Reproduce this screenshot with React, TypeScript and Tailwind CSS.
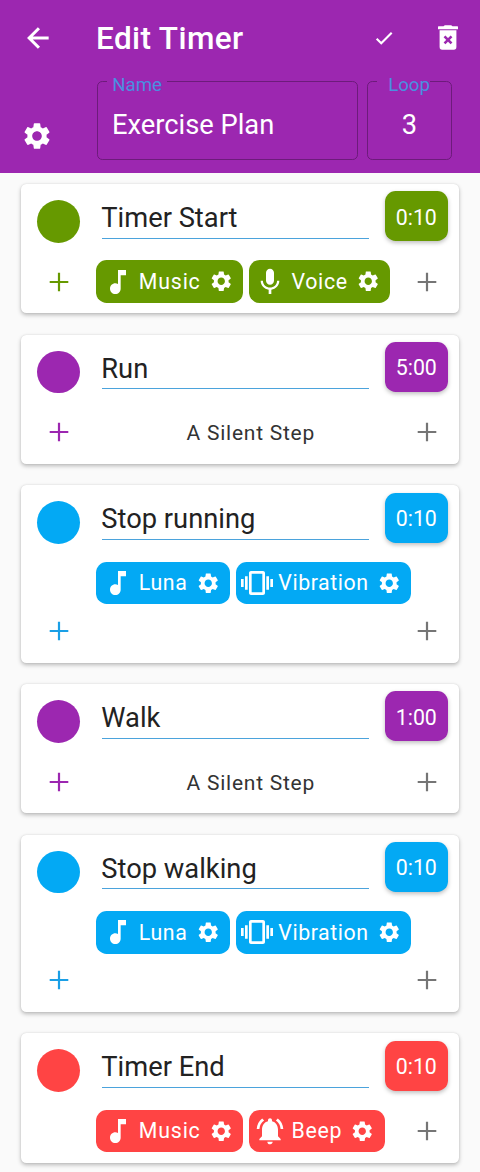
import type { ComponentType } from "react";
import {
  MdMic,
  MdMusicNote,
  MdNotificationsActive,
  MdSettings,
  MdVibration,
} from "react-icons/md";

type Action = { label: string; icon: ComponentType<{ className?: string }>; tracking: string };
type Tone = { bg: string; text: string };
type Step = { name: string; time: string; tone: Tone; actions: Action[]; tall?: boolean; noLeft?: boolean };

const green: Tone = { bg: "bg-[#669900]", text: "text-[#669900]" };
const purple: Tone = { bg: "bg-[#9c27b0]", text: "text-[#9c27b0]" };
const blue: Tone = { bg: "bg-[#03a9f4]", text: "text-[#1a9fe6]" };
const red: Tone = { bg: "bg-[#ff4444]", text: "text-[#ff4444]" };

const music: Action = { label: "Music", icon: MdMusicNote, tracking: "tracking-[0.8px]" };
const luna: Action = { label: "Luna", icon: MdMusicNote, tracking: "tracking-[0.6px]" };
const voice: Action = { label: "Voice", icon: MdMic, tracking: "tracking-[0.65px]" };
const beep: Action = { label: "Beep", icon: MdNotificationsActive, tracking: "tracking-[0.7px]" };
const vibration: Action = { label: "Vibration", icon: MdVibration, tracking: "tracking-[0.55px]" };

const steps: Step[] = [
  { name: "Timer Start", time: "0:10", tone: green, actions: [music, voice] },
  { name: "Run", time: "5:00", tone: purple, actions: [] },
  { name: "Stop running", time: "0:10", tone: blue, actions: [luna, vibration], tall: true },
  { name: "Walk", time: "1:00", tone: purple, actions: [] },
  { name: "Stop walking", time: "0:10", tone: blue, actions: [luna, vibration], tall: true },
  { name: "Timer End", time: "0:10", tone: red, actions: [music, beep], noLeft: true },
];

function BackArrow() {
  return (
    <svg viewBox="0 0 24 24" className="size-8" fill="none" stroke="currentColor" strokeWidth="2.3">
      <path d="M20 12H5.6M12.7 4.7 5.4 12l7.3 7.3" />
    </svg>
  );
}

function Check() {
  return (
    <svg viewBox="0 0 24 24" className="size-[22px]" fill="none" stroke="currentColor" strokeWidth="2.3">
      <path d="m4 12.7 5 5L20.4 6.3" />
    </svg>
  );
}

function Plus({ className }: { className: string }) {
  return (
    <svg viewBox="0 0 32 32" className={`size-8 shrink-0 ${className}`} fill="none" stroke="currentColor" strokeWidth="2.2">
      <path d="M16 6.7v18.6M6.7 16h18.6" />
    </svg>
  );
}

function TrashX() {
  return (
    <svg viewBox="0 0 20 25" className="h-[25px] w-5" fill="currentColor">
      <path d="M.6 1.2h4.9L6.8.2h6.4l1.3 1h4.9q.6 0 .6.6v2.4H0V1.8q0-.6.6-.6z" />
      <path d="M1.6 5.2h16.8v16.9a2.6 2.6 0 0 1-2.6 2.6H4.2a2.6 2.6 0 0 1-2.6-2.6z" />
      <path d="m6.5 11.4 7 7m0-7-7 7" fill="none" stroke="#9c27b0" strokeWidth="2.6" />
    </svg>
  );
}

function Chip({ action, tone }: { action: Action; tone: Tone }) {
  const Icon = action.icon;
  return (
    <div className={`flex h-[42.67px] items-center rounded-[10.67px] pr-[10px] pl-[5.33px] text-white ${tone.bg}`}>
      <Icon className="size-8 shrink-0" />
      <span className={`ml-[5.2px] text-[21.33px] leading-none ${action.tracking}`}>{action.label}</span>
      <MdSettings className="ml-[8.2px] size-[24.5px] shrink-0" />
    </div>
  );
}

function StepCard({ step }: { step: Step }) {
  return (
    <section
      className={`flex w-[437.33px] shrink-0 flex-col rounded-[5.33px] bg-white shadow-[0_2px_4px_rgba(0,0,0,0.26),0_0_2px_rgba(0,0,0,0.1)] ${
        step.tall ? "h-[177.33px]" : "h-[129.33px]"
      }`}
    >
      <div className="flex h-[76.3px] items-start pl-[16px]">
        <div className={`mt-4 size-[42.67px] rounded-full ${step.tone.bg}`} />
        <div className="ml-[22px] flex h-[54.67px] w-[267px] items-center border-b-[1.33px] border-[#4ba3dc] pt-[15.4px] text-[27.3px] leading-none text-[#222]">
          <span className="-ml-[0.7px]">{step.name}</span>
        </div>
        <div
          className={`mt-[7.3px] ml-4 flex h-[50px] w-[62.67px] items-center justify-center rounded-[10.67px] pt-[2px] text-[21.33px] leading-none text-white shadow-[0_2px_4px_rgba(0,0,0,0.25)] ${step.tone.bg}`}
        >
          {step.time}
        </div>
      </div>
      <div className="flex h-[42.67px] items-center">
        <div className="flex w-[75px] justify-center">
          {!step.tall && !step.noLeft && <Plus className={step.tone.text} />}
        </div>
        {step.actions.length > 0 ? (
          <div className="flex flex-1 gap-[5.7px]">
            {step.actions.map((a) => (
              <Chip key={a.label} action={a} tone={step.tone} />
            ))}
          </div>
        ) : (
          <div className="flex-1 pt-[3px] pr-[5.3px] text-center text-[21px] leading-none tracking-[0.75px] text-[#333]">
            A Silent Step
          </div>
        )}
        {!step.tall && <Plus className="mr-[16.1px] text-[#757575]" />}
      </div>
      {step.tall && (
        <div className="flex h-[53px] items-center justify-between pr-[16.1px] pl-[21.5px]">
          <Plus className={step.tone.text} />
          <Plus className="text-[#757575]" />
        </div>
      )}
    </section>
  );
}

export default function App() {
  return (
    <main className="h-[1172px] w-[480px] overflow-hidden bg-[#fafafa] font-['Roboto',sans-serif]">
      <header className="h-[173px] bg-[#9c27b0] text-white">
        <div className="flex h-[75px] items-center pr-[22px] pl-[21.5px]">
          <BackArrow />
          <h1 className="ml-[42.5px] flex-1 pt-[2px] text-[31.5px] leading-none font-medium tracking-[0.4px]">
            Edit Timer
          </h1>
          <Check />
          <div className="ml-[43px]">
            <TrashX />
          </div>
        </div>
        <div className="flex h-[85px] items-end pl-[21px]">
          <MdSettings className="mb-[8px] size-8" />
          <fieldset className="ml-[44.3px] h-[89px] w-[261.2px] rounded-[5.33px] border-[1.33px] border-[#6d1b7b] px-[8.7px]">
            <legend className="h-[20px] px-[5.3px] text-[18.67px] leading-[28px] text-[#4a8fe0]">Name</legend>
            <div className="pt-[19.6px] pl-[5px] text-[27.3px] leading-[28px] whitespace-nowrap">Exercise Plan</div>
          </fieldset>
          <fieldset className="ml-[8.5px] h-[89px] w-[85px] rounded-[5.33px] border-[1.33px] border-[#6d1b7b] px-[8.7px]">
            <legend className="h-[20px] pl-[11.5px] text-[18.67px] leading-[28px] text-[#4a8fe0]">Loop</legend>
            <div className="pt-[19.6px] text-center text-[27.3px] leading-[28px]">3</div>
          </fieldset>
        </div>
      </header>
      <div className="flex flex-col items-center gap-[21.33px] pt-[11px]">
        {steps.map((s) => (
          <StepCard key={s.name} step={s} />
        ))}
      </div>
    </main>
  );
}
